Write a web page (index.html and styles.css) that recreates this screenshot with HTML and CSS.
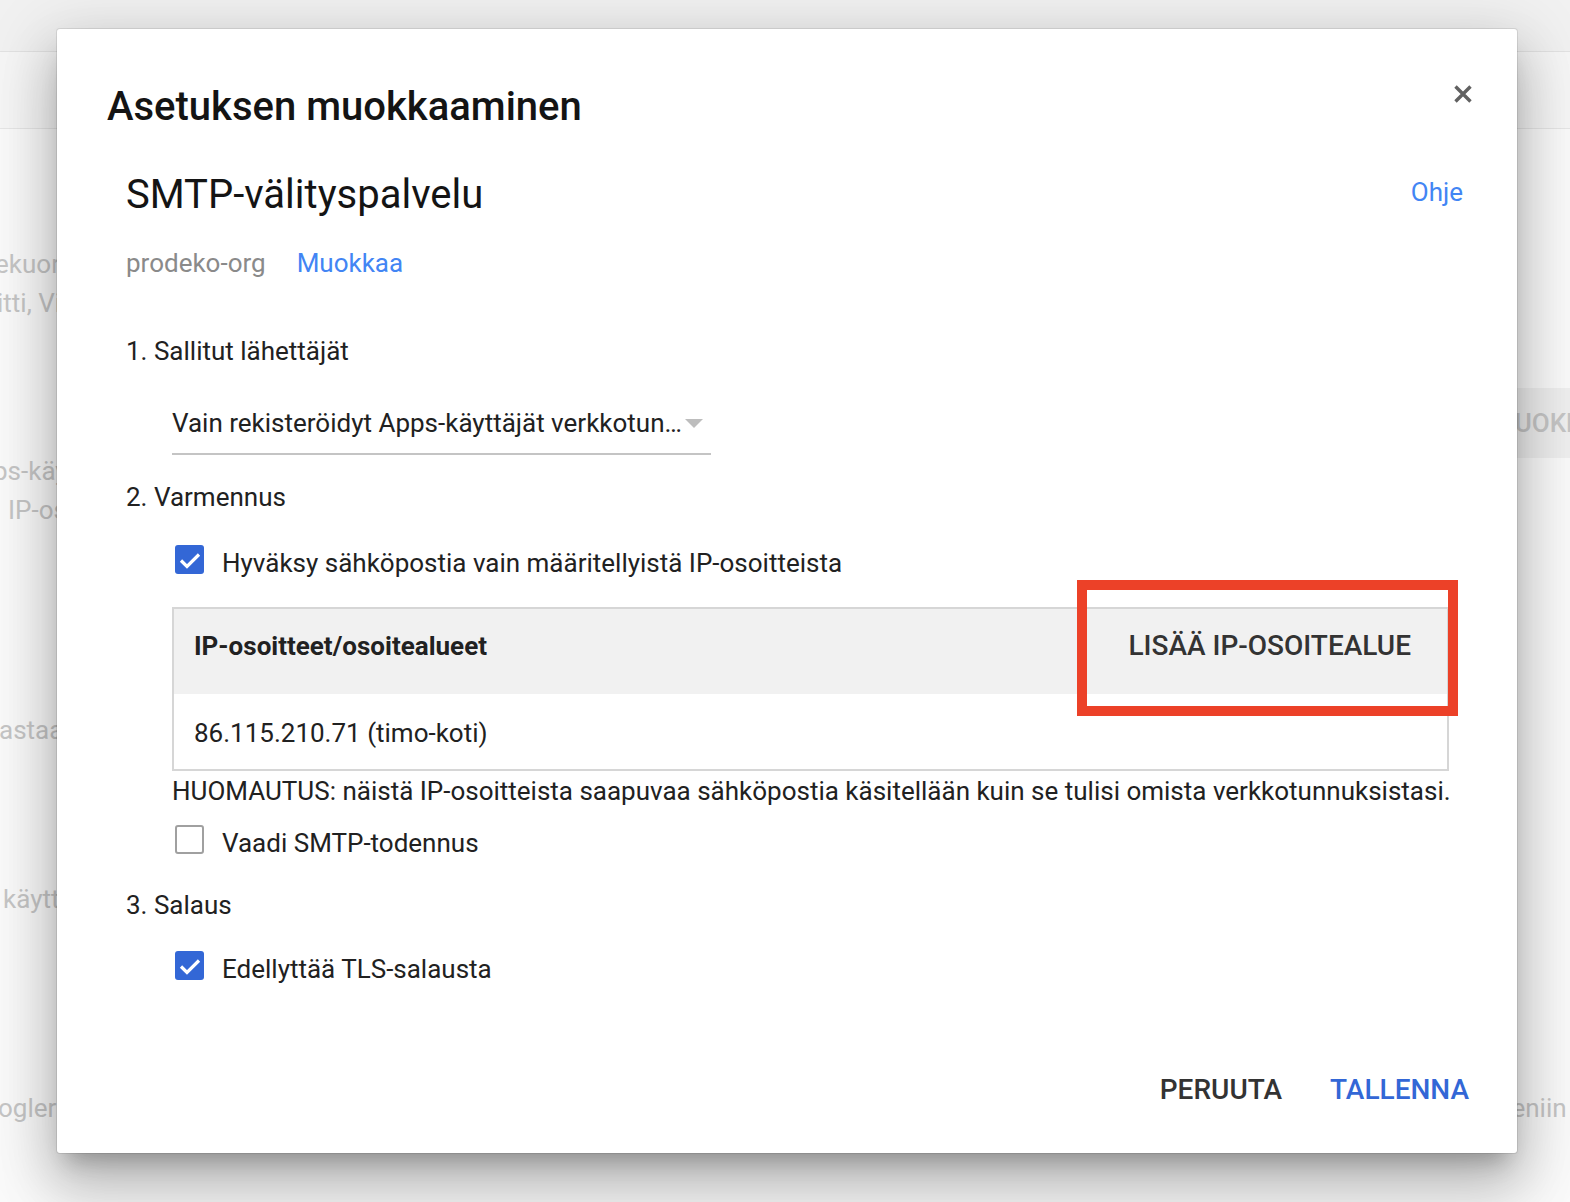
FILE: index.html
```html
<!DOCTYPE html>
<html lang="fi">
<head>
<meta charset="utf-8">
<title>Asetuksen muokkaaminen</title>
<link rel="stylesheet" href="styles.css">
</head>
<body>
<div class="page">
  <div class="topbar"></div>
  <div class="subbar"></div>
  <div class="bg-rows">
    <div class="bg-row r1"><span class="bl s1">ekuoret</span></div>
    <div class="bg-row r2"><span class="bl s2">itti, Vierailija</span></div>
    <div class="bg-row r3"><span class="bl"></span><span class="bg-btn">MUOKKAA</span></div>
    <div class="bg-row r4"><span class="bl s4">ps-käyttäjät</span></div>
    <div class="bg-row r5"><span class="bl s5">IP-osoitteet</span></div>
    <div class="bg-row r6"><span class="bl s6">astaa</span></div>
    <div class="bg-row r7"><span class="bl s7">käyttäjät</span></div>
    <div class="bg-row r8"><span class="bl s8">oglerit</span><span class="br">veniin</span></div>
  </div>
</div>

<div class="dialog">
  <div class="dlg-head">
    <h1 class="dlg-title">Asetuksen muokkaaminen</h1>
    <button class="close" aria-label="Sulje">
      <svg width="24" height="24" viewBox="0 0 24 24"><path d="M4.5 4.5 L19.5 19.5 M19.5 4.5 L4.5 19.5" stroke="#616161" stroke-width="3.4" stroke-linecap="butt" fill="none"/></svg>
    </button>
  </div>

  <div class="content">
    <div class="sub-row">
      <h2 class="sub-title">SMTP-välityspalvelu</h2>
      <a class="link help">Ohje</a>
    </div>
    <div class="org-row">
      <span class="org">prodeko-org</span>
      <a class="link">Muokkaa</a>
    </div>

    <div class="sec sec1">1. Sallitut lähettäjät</div>
    <div class="select">
      <span class="select-text">Vain rekisteröidyt Apps-käyttäjät verkkotun…</span>
      <svg class="arrow" width="18" height="10" viewBox="0 0 18 10"><path d="M0 0 H18 L9 9 Z" fill="#bdbdbd"/></svg>
    </div>

    <div class="sec sec2">2. Varmennus</div>
    <div class="cb-row cb1">
      <span class="cb checked"><svg width="29" height="29" viewBox="0 0 29 29"><path d="M6 15.5 L12 21.5 L24 9.5" stroke="#fff" stroke-width="3.2" fill="none"/></svg></span>
      <span class="cb-label">Hyväksy sähköpostia vain määritellyistä IP-osoitteista</span>
    </div>

    <div class="ip-table">
      <div class="ip-head">
        <span class="ip-head-title">IP-osoitteet/osoitealueet</span>
        <span class="ip-add">LISÄÄ IP-OSOITEALUE</span>
      </div>
      <div class="ip-row">86.115.210.71 (timo-koti)</div>
      <div class="highlight"></div>
    </div>
    <div class="note">HUOMAUTUS: näistä IP-osoitteista saapuvaa sähköpostia käsitellään kuin se tulisi omista verkkotunnuksistasi.</div>

    <div class="cb-row cb2">
      <span class="cb"></span>
      <span class="cb-label">Vaadi SMTP-todennus</span>
    </div>

    <div class="sec sec3">3. Salaus</div>
    <div class="cb-row cb3">
      <span class="cb checked"><svg width="29" height="29" viewBox="0 0 29 29"><path d="M6 15.5 L12 21.5 L24 9.5" stroke="#fff" stroke-width="3.2" fill="none"/></svg></span>
      <span class="cb-label">Edellyttää TLS-salausta</span>
    </div>
  </div>

  <div class="dlg-foot">
    <span class="btn cancel">PERUUTA</span>
    <span class="btn save">TALLENNA</span>
  </div>
</div>
</body>
</html>
```

FILE: styles.css
```css
* { box-sizing: border-box; }
html, body { margin: 0; padding: 0; }
body {
  font-family: Roboto, "Noto Sans", "Liberation Sans", sans-serif;
  background: #fafafa;
  width: 1570px;
  height: 1202px;
  overflow: hidden;
  position: relative;
}

/* background page */
.page { height: 1202px; overflow: hidden; color: #c6c6c6; font-size: 26px; line-height: 32px; }
.topbar { height: 52px; background: #f1f1f1; border-bottom: 1px solid #e2e2e2; }
.subbar { height: 77px; background: #f6f6f6; border-bottom: 1px solid #e6e6e6; }
.bg-rows { display: flex; flex-direction: column; }
.bg-row { display: flex; justify-content: space-between; align-items: center; white-space: nowrap; }
.r1 { margin-top: 119px; }
.r2 { margin-top: 7px; }
.r3 { margin-top: 69px; height: 70px; }
.r4 { margin-top: -3px; }
.r5 { margin-top: 7px; }
.r6 { margin-top: 188px; }
.r7 { margin-top: 137px; }
.r8 { margin-top: 177px; }
.s1 { margin-left: -5px; }
.s2 { margin-left: -3px; }
.s4 { margin-left: -7px; }
.s5 { margin-left: 8px; }
.s6 { margin-left: -1px; }
.s7 { margin-left: 3px; }
.s8 { margin-left: -2px; }
.bg-btn { background: #efefef; height: 70px; width: 90px; padding: 19px 0 0 12px; font-weight: 500; overflow: hidden; }
.br { width: 71px; overflow: hidden; }

/* dialog */
.dialog {
  position: absolute;
  left: 57px;
  top: 29px;
  width: 1460px;
  height: 1124px;
  background: #fff;
  border-radius: 3px;
  display: flex;
  flex-direction: column;
  color: #212121;
  box-shadow: 0 0 0 1px rgba(0,0,0,.09),
              0 34px 54px 4px rgba(0,0,0,.18),
              0 14px 66px 12px rgba(0,0,0,.12),
              0 16px 22px -10px rgba(0,0,0,.25);
}
.dlg-head { display: flex; justify-content: space-between; align-items: flex-start; padding: 54px 42px 0 50px; }
.dlg-title { margin: 0; font-size: 40px; line-height: 47px; font-weight: 500; color: #141414; }
.close { border: 0; background: none; padding: 0; margin-top: -1px; width: 24px; height: 24px; display: block; }
.close svg { display: block; }

.content { padding: 0 54px 0 69px; font-size: 26px; line-height: 32px; }
.sub-row { display: flex; justify-content: space-between; align-items: flex-start; margin-top: 42px; }
.sub-title { margin: 0; font-size: 40px; line-height: 46px; font-weight: 400; color: #141414; }
.link { color: #4285f4; text-decoration: none; }
.help { margin-top: 4px; }
.org-row { display: flex; gap: 31px; margin-top: 29px; }
.org { color: #8a8a8a; }

.sec { color: #212121; }
.sec1 { margin-top: 56px; }
.select { display: flex; align-items: flex-start; width: 539px; margin: 40px 0 0 46px; padding-bottom: 14px; border-bottom: 2px solid #c4c4c4; }
.select-text { white-space: nowrap; }
.arrow { margin: 12px 0 0 3px; }
.sec2 { margin-top: 26px; }

.cb-row { display: flex; align-items: flex-start; margin-left: 49px; }
.cb { width: 29px; height: 29px; border-radius: 3px; flex: none; border: 2.5px solid #a0a0a0; }
.cb.checked { background: #3367d6; border: 0; }
.cb svg { display: block; }
.cb-label { margin: 2px 0 0 18px; white-space: nowrap; }
.cb1 { margin-top: 32px; }

.ip-table { position: relative; margin: 28px 14px 0 46px; border: 2px solid #d6d6d6; }
.ip-head { display: flex; justify-content: space-between; align-items: flex-start; height: 85px; background: #f1f1f1; padding: 21px 36px 0 20px; }
.ip-head-title { font-weight: 700; }
.ip-add { font-weight: 500; font-size: 28px; color: #333; }
.ip-row { height: 75px; padding: 23px 20px 0; }
.highlight { position: absolute; left: 903px; top: -29px; width: 381px; height: 136px; border: 10px solid #ec4128; }
.note { margin: 4px 0 0 46px; white-space: nowrap; }

.cb2 { margin-top: 18px; }
.sec3 { margin-top: 30px; }
.cb3 { margin-top: 30px; }

.dlg-foot { margin-top: auto; display: flex; justify-content: flex-end; gap: 48px; padding: 0 48px 47px; font-size: 28px; line-height: 32px; font-weight: 500; }
.cancel { color: #333; }
.save { color: #3367d6; }
```
